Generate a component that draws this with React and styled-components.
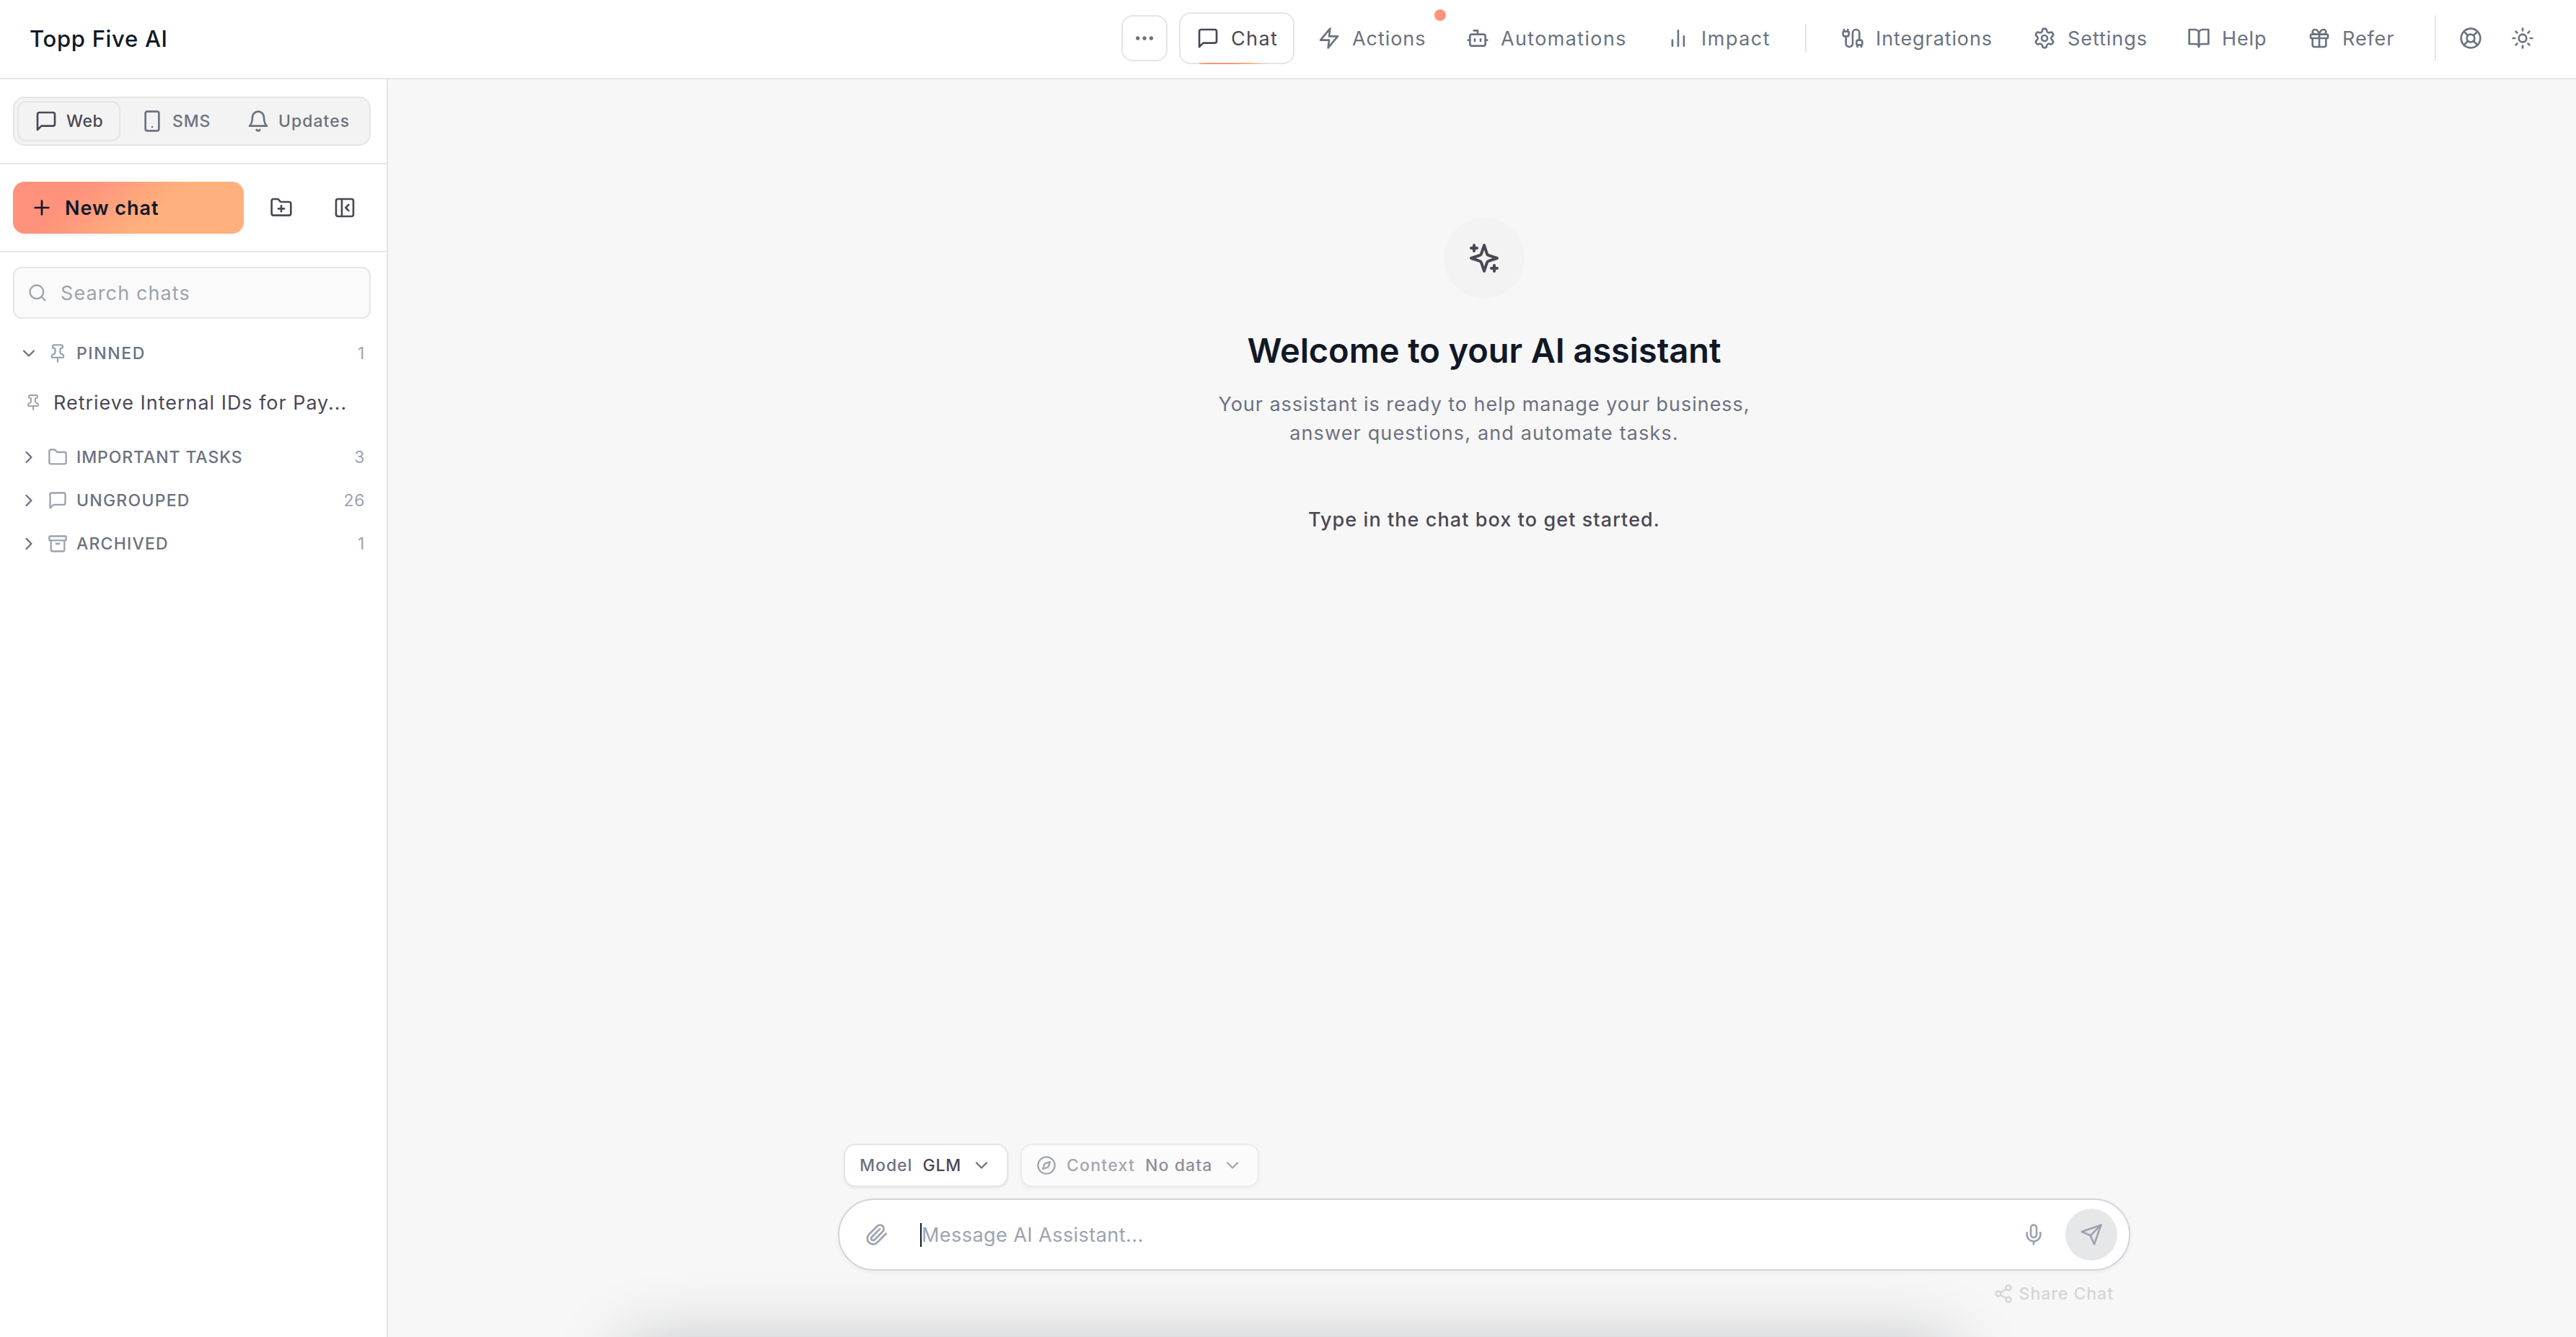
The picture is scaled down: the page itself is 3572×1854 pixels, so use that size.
import React from "react";
import styled, { createGlobalStyle } from "styled-components";
import {
  Archive,
  Bot,
  Cable,
  ChevronDown,
  ChevronRight,
  Compass,
  Ellipsis,
  Folder,
  FolderPlus,
  Gift,
  LifeBuoy,
  Mic,
  PanelLeftClose,
  Pin,
  Plus,
  Search,
  Settings,
  Share2,
  Smartphone,
  Sun,
} from "lucide-react";

const colors = {
  ink: "#111827",
  text: "#4b4855",
  muted: "#6b7280",
  light: "#9ca3af",
  faint: "#d1d5db",
  line: "#e5e5e5",
  accent: "#ff927c",
  accentEnd: "#ffb07c",
};

const GlobalStyle = createGlobalStyle`
  * {
    box-sizing: border-box;
  }
  body {
    margin: 0;
    font-family: Inter, "Liberation Sans", sans-serif;
    font-size: 27px;
    color: ${colors.text};
    background: white;
  }
  svg {
    flex-shrink: 0;
  }
`;

const Page = styled.div`
  position: relative;
  display: flex;
  flex-direction: column;
  width: 3572px;
  height: 1854px;
  overflow: hidden;
`;

const Label = styled.span`
  white-space: nowrap;
  letter-spacing: ${(p) => p.$track || 1}px;
`;

/* ---------- header ---------- */

const Header = styled.header`
  display: flex;
  align-items: center;
  height: 110px;
  padding: 0 42px 2px 41px;
  border-bottom: 2px solid ${colors.line};
  background: white;
`;

const Brand = styled.div`
  margin-right: auto;
  font-size: 31px;
  font-weight: 450;
  letter-spacing: 0.7px;
  color: ${colors.ink};
`;

const Nav = styled.nav`
  display: flex;
  align-items: center;
  gap: 8px;
`;

const MoreButton = styled.button`
  display: flex;
  align-items: center;
  justify-content: center;
  width: 64px;
  height: 64px;
  margin-right: 8px;
  padding: 0;
  border: 2px solid ${colors.line};
  border-radius: 16px;
  background: white;
  color: ${colors.muted};
`;

const NavItem = styled.a`
  position: relative;
  display: flex;
  align-items: center;
  gap: 16px;
  width: ${(p) => p.$width}px;
  height: 72px;
  padding-left: 22px;
  border: 2px solid ${(p) => (p.$active ? colors.line : "transparent")};
  border-radius: 16px;
  color: ${(p) => (p.$active ? colors.text : colors.muted)};
`;

const ActiveBar = styled.span`
  position: absolute;
  left: 26px;
  right: 34px;
  bottom: -2px;
  height: 2px;
  background: linear-gradient(
    to right,
    ${colors.accentEnd},
    ${colors.accent} 12%,
    ${colors.accent} 45%,
    ${colors.accentEnd} 70%,
    transparent
  );
`;

const Dot = styled.span`
  position: absolute;
  top: -6px;
  right: -6px;
  width: 16px;
  height: 16px;
  border-radius: 50%;
  background: ${colors.accent};
`;

const NavDivider = styled.span`
  width: 2px;
  height: 40px;
  margin: 0 16px;
  background: ${colors.line};
`;

const HeaderTools = styled.div`
  display: flex;
  gap: 8px;
  margin-left: 32px;
  padding-left: 16px;
  border-left: 2px solid ${colors.line};
`;

const IconButton = styled.button`
  display: flex;
  align-items: center;
  justify-content: center;
  width: ${(p) => p.$size || 64}px;
  height: ${(p) => p.$size || 64}px;
  padding: 0;
  border: none;
  background: none;
  color: ${(p) => p.$color || colors.muted};
`;

/* ---------- sidebar ---------- */

const Body = styled.div`
  display: flex;
  flex: 1;
`;

const Sidebar = styled.aside`
  width: 538px;
  border-right: 2px solid ${colors.line};
  background: white;
`;

const Section = styled.div`
  display: flex;
  gap: 16px;
  padding: 24px 22px 24px 18px;
  border-bottom: 2px solid ${colors.line};
`;

const Tabs = styled.div`
  display: flex;
  gap: 4px;
  width: 496px;
  height: 68px;
  padding: 4px;
  border: 2px solid ${colors.line};
  border-radius: 16px;
  background: #f3f3f3;
`;

const Tab = styled.button`
  display: flex;
  align-items: center;
  gap: 12px;
  width: ${(p) => p.$width}px;
  height: 56px;
  padding: 0 0 0 22px;
  border: 2px solid ${(p) => (p.$active ? colors.line : "transparent")};
  border-radius: 12px;
  background: none;
  font: 450 23px Inter, sans-serif;
  color: ${(p) => (p.$active ? colors.text : colors.muted)};
`;

const NewChat = styled.button`
  display: flex;
  align-items: center;
  gap: 16px;
  width: 320px;
  height: 72px;
  padding: 0 24px;
  border: none;
  border-radius: 16px;
  background: linear-gradient(135deg, ${colors.accent} 25%, ${colors.accentEnd} 62%);
  box-shadow: 0 2px 4px rgba(0, 0, 0, 0.05);
  font: 600 27px Inter, sans-serif;
  color: ${colors.ink};
`;

const SearchBox = styled.div`
  display: flex;
  align-items: center;
  gap: 18px;
  height: 72px;
  margin: 20px 22px 18px 18px;
  padding-left: 18px;
  border: 2px solid ${colors.line};
  border-radius: 12px;
  background: #fafafa;
  color: ${colors.light};
`;

const Group = styled.div`
  display: flex;
  align-items: center;
  gap: 12px;
  height: 60px;
  padding: 0 30px 0 26px;
  font-size: 23px;
  font-weight: 450;
  color: ${colors.muted};

  svg + svg {
    color: ${colors.light};
  }
`;

const Count = styled.span`
  margin-left: auto;
  font-weight: 400;
  letter-spacing: 0.6px;
  color: ${colors.light};
`;

const ChatRow = styled.div`
  display: flex;
  align-items: center;
  gap: 16px;
  height: 60px;
  margin: 8px 0 16px;
  padding-left: 34px;

  svg {
    color: ${colors.light};
  }
`;

/* ---------- main ---------- */

const Main = styled.main`
  display: flex;
  flex: 1;
  flex-direction: column;
  align-items: center;
  padding: 192px 0 44px 6px;
  background: #f7f7f7;
`;

const Hero = styled.div`
  display: flex;
  flex: 1;
  flex-direction: column;
  align-items: center;
  text-align: center;
`;

const HeroIcon = styled.div`
  display: flex;
  align-items: center;
  justify-content: center;
  width: 112px;
  height: 112px;
  border-radius: 50%;
  background: #f3f3f3;
`;

const Title = styled.h1`
  margin: 40px 0 23px;
  font-size: 47px;
  font-weight: 600;
  line-height: 64px;
  letter-spacing: -0.1px;
  color: ${colors.ink};
`;

const Line = styled.p`
  margin: 0;
  line-height: 40px;
  letter-spacing: ${(p) => p.$track}px;
  color: ${colors.muted};
`;

const Hint = styled.p`
  margin: 80px 0 0;
  font-weight: 450;
  line-height: 40px;
  letter-spacing: 1.08px;
`;

const ComposerArea = styled.div`
  width: 1792px;
`;

const Chips = styled.div`
  display: flex;
  gap: 17px;
  margin-bottom: 16px;
  padding-left: 8px;
`;

const Chip = styled.div`
  display: flex;
  align-items: center;
  gap: 14px;
  width: ${(p) => p.$width}px;
  height: 60px;
  padding-left: 20px;
  border: 2px solid ${colors.line};
  border-radius: 16px;
  background: white;
  box-shadow: 0 2px 4px rgba(0, 0, 0, 0.06);
  font-size: 23px;
  font-weight: 450;
  color: ${colors.muted};
  opacity: ${(p) => (p.$disabled ? 0.6 : 1)};
`;

const ChipValue = styled(Label)`
  font-weight: ${(p) => p.$weight || 500};
  color: ${colors.text};
`;

const Composer = styled.div`
  display: flex;
  align-items: center;
  height: 100px;
  padding: 0 16px 0 36px;
  border: 2px solid ${colors.faint};
  border-radius: 50px;
  background: white;
  box-shadow: 0 2px 6px rgba(0, 0, 0, 0.06);
  color: ${colors.light};
`;

const Caret = styled.span`
  width: 2px;
  height: 33px;
  margin-left: 44px;
  background: ${colors.ink};
`;

const Placeholder = styled(Label)`
  flex: 1;
`;

const SendButton = styled(IconButton)`
  margin-left: 28px;
  border-radius: 50%;
  background: #e6e7e9;
`;

const Share = styled.div`
  display: flex;
  align-items: center;
  justify-content: flex-end;
  gap: 8px;
  height: 32px;
  margin-top: 16px;
  padding-right: 23px;
  font-size: 23px;
  font-weight: 450;
  color: ${colors.faint};
`;

// Shadow cast upwards by a sheet parked just under the fold
const SheetShadow = styled.div`
  position: absolute;
  left: 864px;
  top: 1864px;
  width: 1848px;
  height: 200px;
  border-radius: 40px;
  box-shadow: 0 0 96px rgba(17, 24, 39, 0.25);
`;

/* ---------- icons ---------- */

const Svg = ({ size = 32, children }) => (
  <svg
    width={size}
    height={size}
    viewBox="0 0 24 24"
    fill="none"
    stroke="currentColor"
    strokeWidth="2"
    strokeLinecap="round"
    strokeLinejoin="round"
  >
    {children}
  </svg>
);

const ChatIcon = ({ size }) => (
  <Svg size={size}>
    <path d="M21 15a2 2 0 0 1-2 2H7l-4 4V5a2 2 0 0 1 2-2h14a2 2 0 0 1 2 2z" />
  </Svg>
);

const BoltIcon = () => (
  <Svg>
    <polygon points="13 2 3 14 12 14 11 22 21 10 12 10 13 2" />
  </Svg>
);

const BarsIcon = () => (
  <Svg>
    <path d="M18 20V10M12 20V4M6 20v-6" />
  </Svg>
);

const BookIcon = () => (
  <Svg>
    <path d="M2 3h6a4 4 0 0 1 4 4v14a3 3 0 0 0-3-3H2z" />
    <path d="M22 3h-6a4 4 0 0 0-4 4v14a3 3 0 0 1 3-3h7z" />
  </Svg>
);

const BellIcon = () => (
  <Svg>
    <path d="M6 8a6 6 0 0 1 12 0c0 7 3 9 3 9H3s3-2 3-9" />
    <path d="M10.3 21a1.94 1.94 0 0 0 3.4 0" />
  </Svg>
);

const ClipIcon = () => (
  <Svg>
    <path d="m21.44 11.05-9.19 9.19a6 6 0 0 1-8.49-8.49l8.57-8.57A4 4 0 1 1 18 8.84l-8.59 8.57a2 2 0 0 1-2.83-2.83l8.49-8.48" />
  </Svg>
);

const SendIcon = () => (
  <Svg>
    <path d="m22 2-7 20-4-9-9-4Z" />
    <path d="M22 2 11 13" />
  </Svg>
);

const SparklesIcon = () => (
  <Svg size={48}>
    <path d="m12 3-1.912 5.813a2 2 0 0 1-1.275 1.275L3 12l5.813 1.912a2 2 0 0 1 1.275 1.275L12 21l1.912-5.813a2 2 0 0 1 1.275-1.275L21 12l-5.813-1.912a2 2 0 0 1-1.275-1.275L12 3Z" />
    <path d="M5 3v4M19 17v4M3 5h4M17 19h4" />
  </Svg>
);

const mainNav = [
  { label: "Chat", icon: ChatIcon, width: 160, track: 1.4, active: true },
  { label: "Actions", icon: BoltIcon, width: 198, track: 0.95, dot: true },
  { label: "Automations", icon: Bot, width: 270, track: 1.35 },
  { label: "Impact", icon: BarsIcon, width: 192, track: 1.5 },
];

const sideNav = [
  { label: "Integrations", icon: Cable, width: 258, track: 0.9 },
  { label: "Settings", icon: Settings, width: 206, track: 0.95 },
  { label: "Help", icon: BookIcon, width: 159, track: 0.9 },
  { label: "Refer", icon: Gift, width: 168, track: 0.9 },
];

const groups = [
  { label: "IMPORTANT TASKS", icon: Folder, count: 3, track: 0.9 },
  { label: "UNGROUPED", icon: ChatIcon, count: 26, track: 1.25 },
  { label: "ARCHIVED", icon: Archive, count: 1, track: 1.2 },
];

const renderNav = ({ label, icon: Icon, width, track, active, dot }) => (
  <NavItem key={label} $width={width} $active={active}>
    <Icon size={32} />
    <Label $track={track}>{label}</Label>
    {active && <ActiveBar />}
    {dot && <Dot />}
  </NavItem>
);

function App() {
  return (
    <Page>
      <GlobalStyle />
      <Header>
        <Brand>Topp Five AI</Brand>
        <Nav>
          <MoreButton>
            <Ellipsis size={32} />
          </MoreButton>
          {mainNav.map(renderNav)}
          <NavDivider />
          {sideNav.map(renderNav)}
        </Nav>
        <HeaderTools>
          <IconButton>
            <LifeBuoy size={32} />
          </IconButton>
          <IconButton>
            <Sun size={32} />
          </IconButton>
        </HeaderTools>
      </Header>

      <Body>
        <Sidebar>
          <Section>
            <Tabs>
              <Tab $width={143} $active>
                <ChatIcon />
                <Label $track={0.6}>Web</Label>
              </Tab>
              <Tab $width={143}>
                <Smartphone size={32} />
                <Label $track={0.8}>SMS</Label>
              </Tab>
              <Tab $width={190}>
                <BellIcon />
                <Label $track={1}>Updates</Label>
              </Tab>
            </Tabs>
          </Section>
          <Section>
            <NewChat>
              <Plus size={32} />
              <Label $track={0.95}>New chat</Label>
            </NewChat>
            <IconButton $size={72} $color={colors.text}>
              <FolderPlus size={32} />
            </IconButton>
            <IconButton $size={72} $color={colors.text}>
              <PanelLeftClose size={32} />
            </IconButton>
          </Section>

          <SearchBox>
            <Search size={28} />
            <Label $track={1.1}>Search chats</Label>
          </SearchBox>
          <Group>
            <ChevronDown size={28} />
            <Pin size={28} />
            <Label $track={1.6}>PINNED</Label>
            <Count>1</Count>
          </Group>
          <ChatRow>
            <Pin size={24} />
            <Label $track={0.97}>Retrieve Internal IDs for Pay...</Label>
          </ChatRow>
          {groups.map(({ label, icon: Icon, count, track }) => (
            <Group key={label}>
              <ChevronRight size={28} />
              <Icon size={28} />
              <Label $track={track}>{label}</Label>
              <Count>{count}</Count>
            </Group>
          ))}
        </Sidebar>

        <Main>
          <Hero>
            <HeroIcon>
              <SparklesIcon />
            </HeroIcon>
            <Title>Welcome to your AI assistant</Title>
            <Line $track={0.96}>Your assistant is ready to help manage your business,</Line>
            <Line $track={1.15}>answer questions, and automate tasks.</Line>
            <Hint>Type in the chat box to get started.</Hint>
          </Hero>

          <ComposerArea>
            <Chips>
              <Chip $width={228}>
                <Label $track={1}>Model</Label>
                <ChipValue $track={0.8} $weight={550}>GLM</ChipValue>
                <ChevronDown size={28} />
              </Chip>
              <Chip $width={331} $disabled>
                <Compass size={28} />
                <Label $track={1.25}>Context</Label>
                <ChipValue $track={1.1}>No data</ChipValue>
                <ChevronDown size={28} />
              </Chip>
            </Chips>
            <Composer>
              <ClipIcon />
              <Caret />
              <Placeholder $track={0.45}>Message AI Assistant...</Placeholder>
              <Mic size={32} />
              <SendButton $size={72} $color={colors.light}>
                <SendIcon />
              </SendButton>
            </Composer>
            <Share>
              <Share2 size={28} />
              <Label $track={1}>Share Chat</Label>
            </Share>
          </ComposerArea>
        </Main>
      </Body>
      <SheetShadow />
    </Page>
  );
}

export default App;
